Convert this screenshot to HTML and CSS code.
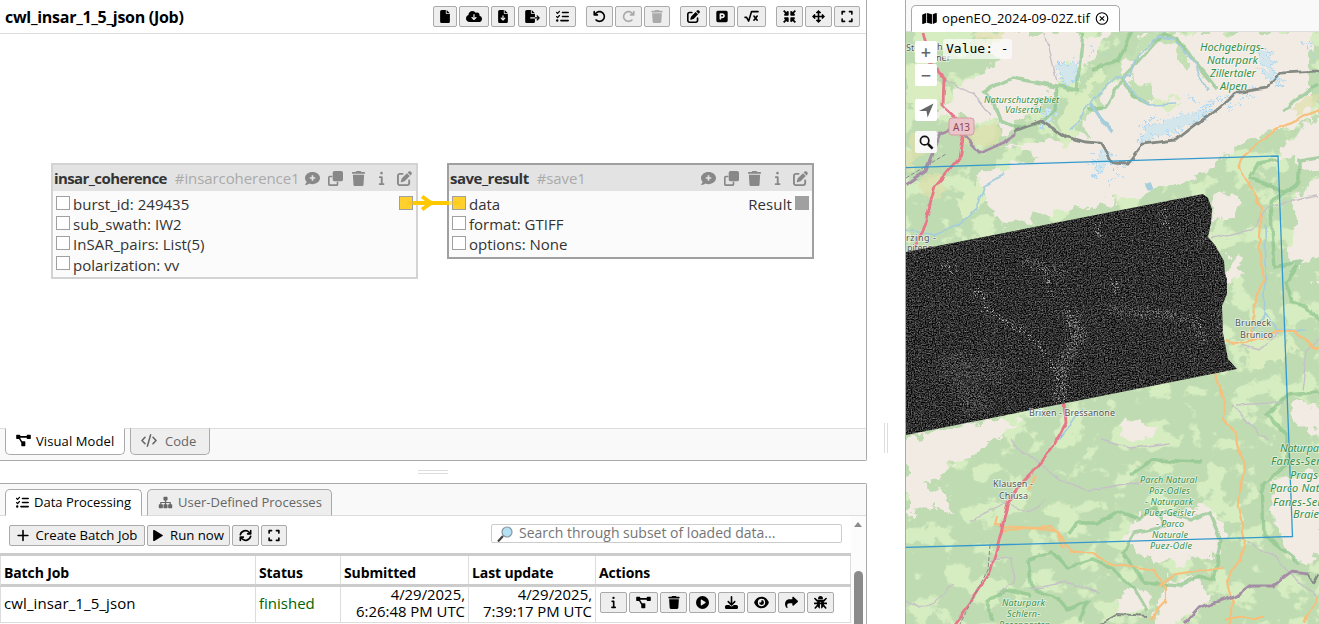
FILE: index.html
```html
<!DOCTYPE html>
<html lang="en">
<head>
<meta charset="utf-8">
<title>openEO Web Editor</title>
<link rel="stylesheet" href="styles.css">
</head>
<body>
<svg class="defs" width="0" height="0" aria-hidden="true">
  <symbol id="file" viewBox="0 0 384 512"><path d="M0 64C0 28.7 28.7 0 64 0H224V128c0 17.7 14.3 32 32 32H384V448c0 35.3-28.7 64-64 64H64c-35.3 0-64-28.7-64-64V64zm384 64H256V0L384 128z"/></symbol>
  <symbol id="cloud" viewBox="0 0 640 512"><path d="M144 480C64.5 480 0 415.5 0 336c0-62.8 40.2-116.2 96.2-135.9c-.1-2.7-.2-5.4-.2-8.1c0-88.4 71.6-160 160-160c59.3 0 111 32.2 138.7 80.2C409.9 102 428.3 96 448 96c53 0 96 43 96 96c0 12.2-2.3 23.8-6.4 34.6C596 238.4 640 290.1 640 352c0 70.7-57.3 128-128 128H144zm79-167l80 80c9.4 9.4 24.6 9.4 33.9 0l80-80c9.4-9.4 9.4-24.6 0-33.9s-24.6-9.4-33.9 0l-39 39V184c0-13.3-10.7-24-24-24s-24 10.7-24 24V318.1l-39-39c-9.4-9.4-24.6-9.4-33.9 0s-9.4 24.6 0 33.9z"/></symbol>
  <symbol id="filedown" viewBox="0 0 384 512"><path d="M64 0C28.7 0 0 28.7 0 64V448c0 35.3 28.7 64 64 64H320c35.3 0 64-28.7 64-64V160H256c-17.7 0-32-14.3-32-32V0H64zM256 0V128H384L256 0zM216 232V334.1l31-31c9.4-9.4 24.6-9.4 33.9 0s9.4 24.6 0 33.9l-72 72c-9.4 9.4-24.6 9.4-33.9 0l-72-72c-9.4-9.4-9.4-24.6 0-33.9s24.6-9.4 33.9 0l31 31V232c0-13.3 10.7-24 24-24s24 10.7 24 24z"/></symbol>
  <symbol id="export" viewBox="0 0 576 512"><path d="M0 64C0 28.7 28.7 0 64 0H224V128c0 17.7 14.3 32 32 32H384V288H216c-13.3 0-24 10.7-24 24s10.7 24 24 24H384V448c0 35.3-28.7 64-64 64H64c-35.3 0-64-28.7-64-64V64zM384 336V288H494.1l-39-39c-9.4-9.4-9.4-24.6 0-33.9s24.6-9.4 33.9 0l80 80c9.4 9.4 9.4 24.6 0 33.9l-80 80c-9.4 9.4-24.6 9.4-33.9 0s-9.4-24.6 0-33.9l39-39H384zm0-208H256V0L384 128z"/></symbol>
  <symbol id="tasks" viewBox="0 0 512 512"><path d="M152.1 38.2c9.9 8.9 10.7 24 1.8 33.9l-72 80c-4.4 4.9-10.6 7.8-17.2 7.9s-12.9-2.4-17.6-7L7 113C-2.3 103.6-2.3 88.4 7 79s24.6-9.4 33.9 0l22.1 22.1 55.1-61.2c8.9-9.9 24-10.7 33.9-1.8zm0 160c9.9 8.9 10.7 24 1.8 33.9l-72 80c-4.4 4.9-10.6 7.8-17.2 7.9s-12.9-2.4-17.6-7L7 273c-9.4-9.4-9.4-24.6 0-33.9s24.6-9.4 33.9 0l22.1 22.1 55.1-61.2c8.9-9.9 24-10.7 33.9-1.8zM224 96c0-17.7 14.3-32 32-32H480c17.7 0 32 14.3 32 32s-14.3 32-32 32H256c-17.7 0-32-14.3-32-32zm0 160c0-17.7 14.3-32 32-32H480c17.7 0 32 14.3 32 32s-14.3 32-32 32H256c-17.7 0-32-14.3-32-32zM160 416c0-17.7 14.3-32 32-32H480c17.7 0 32 14.3 32 32s-14.3 32-32 32H192c-17.7 0-32-14.3-32-32zM48 368a48 48 0 1 1 0 96 48 48 0 1 1 0-96z"/></symbol>
  <symbol id="undo" viewBox="0 0 512 512"><path d="M125.7 160H176c17.7 0 32 14.3 32 32s-14.3 32-32 32H48c-17.7 0-32-14.3-32-32V64c0-17.7 14.3-32 32-32s32 14.3 32 32v51.2L97.6 97.6c87.5-87.5 229.3-87.5 316.8 0s87.5 229.3 0 316.8s-229.3 87.5-316.8 0c-12.5-12.5-12.5-32.8 0-45.3s32.8-12.5 45.3 0c62.5 62.5 163.8 62.5 226.3 0s62.5-163.8 0-226.3s-163.8-62.5-226.3 0L125.7 160z"/></symbol>
  <symbol id="trash" viewBox="0 0 448 512"><path d="M135.2 17.7L128 32H32C14.3 32 0 46.3 0 64S14.3 96 32 96H416c17.7 0 32-14.3 32-32s-14.3-32-32-32H320l-7.2-14.3C307.4 6.8 296.3 0 284.2 0H163.8c-12.1 0-23.2 6.8-28.6 17.7zM416 128H32L53.2 467c1.6 25.3 22.6 45 47.9 45H346.9c25.3 0 46.3-19.7 47.9-45L416 128z"/></symbol>
  <symbol id="edit" viewBox="0 0 512 512"><path d="M471.6 21.7c-21.9-21.9-57.3-21.9-79.2 0L362.3 51.7l97.9 97.9 30.1-30.1c21.9-21.9 21.9-57.3 0-79.2L471.6 21.7zm-299.2 220c-6.1 6.1-10.8 13.6-13.5 21.9l-29.6 88.8c-2.9 8.6-.6 18.1 5.8 24.6s15.9 8.7 24.6 5.8l88.8-29.6c8.2-2.7 15.7-7.4 21.9-13.5L437.7 172.3 339.7 74.3 172.4 241.7zM96 64C43 64 0 107 0 160V416c0 53 43 96 96 96H352c53 0 96-43 96-96V320c0-17.7-14.3-32-32-32s-32 14.3-32 32v96c0 17.7-14.3 32-32 32H96c-17.7 0-32-14.3-32-32V160c0-17.7 14.3-32 32-32h96c17.7 0 32-14.3 32-32s-14.3-32-32-32H96z"/></symbol>
  <symbol id="parking" viewBox="0 0 448 512"><path fill-rule="evenodd" d="M64 32C28.7 32 0 60.7 0 96V416c0 35.3 28.7 64 64 64H384c35.3 0 64-28.7 64-64V96c0-35.3-28.7-64-64-64H64zM192 256h48c17.7 0 32-14.3 32-32s-14.3-32-32-32H192v64zm48 64H192v32c0 17.7-14.3 32-32 32s-32-14.3-32-32V288 168c0-22.1 17.9-40 40-40h72c53 0 96 43 96 96s-43 96-96 96z"/></symbol>
  <symbol id="root" viewBox="0 0 576 512"><path class="ln" d="M32 288h64l80 150L288 64H544M384 240l128 160M512 240L384 400"/></symbol>
  <symbol id="compress" viewBox="0 0 512 512"><path d="M50 2L130 82 160 52Q224 10 224 80V192Q224 224 192 224H80Q10 224 52 160L82 130 2 50zM462 2L382 82 352 52Q288 10 288 80V192Q288 224 320 224H432Q502 224 460 160L430 130 510 50zM50 510L130 430 160 460Q224 502 224 432V320Q224 288 192 288H80Q10 288 52 352L82 382 2 462zM462 510L382 430 352 460Q288 502 288 432V320Q288 288 320 288H432Q502 288 460 352L430 382 510 462z"/></symbol>
  <symbol id="move" viewBox="0 0 512 512"><path d="M256 0l100 100q10 28-20 28h-48v96h96v-48q0-30 28-20l100 100-100 100q-28 10-28-20v-48h-96v96h48q30 0 20 28L256 512 156 412q-10-28 20-28h48v-96h-96v48q0 30-28 20L0 256l100-100q28-10 28 20v48h96v-96h-48q-30 0-20-28z"/></symbol>
  <symbol id="expand" viewBox="0 0 448 512"><path class="ln" d="M32 160V64h96M320 64h96v96M416 352v96h-96M128 448H32v-96"/></symbol>
  <symbol id="comment" viewBox="0 0 512 512"><path fill-rule="evenodd" d="M256 32C114.600 32 0 125 0 240c0 49.600 21.400 95 57 130.700C44 421 3 466 .500 468.500c-2.200 2.300-2.800 5.700-1.500 8.700S4.800 480 8 480c66.300 0 116-31.800 140.600-51.400C181 441 217.600 448 256 448c141.400 0 256-93 256-208S397.400 32 256 32zM228 145h56v67h67v56h-67v67h-56v-67h-67v-56h67z"/></symbol>
  <symbol id="clone" viewBox="0 0 512 512"><path d="M224 0h224c36 0 64 28 64 64v224c0 36-28 64-64 64H224c-36 0-64-28-64-64V64c0-36 28-64 64-64z"/><path class="ln thin" d="M128 188H64q-36 0-36 36v224q0 36 36 36h224q36 0 36-36v-64"/></symbol>
  <symbol id="info" viewBox="0 0 192 512"><circle cx="96" cy="72" r="46"/><path class="ln" d="M40 210h64v236M32 446h132"/></symbol>
  <symbol id="model" viewBox="0 0 576 512"><path d="M24 32h112q24 0 24 24v24h256V56q0-24 24-24h112q24 0 24 24v112q0 24-24 24H440q-24 0-24-24v-24H160v24l72 120h104q24 0 24 24v144q0 24-24 24H224q-24 0-24-24V346L112 192H24Q0 192 0 168V56Q0 32 24 32z"/></symbol>
  <symbol id="code" viewBox="0 0 640 512"><path class="ln" d="M160 128L40 256l120 128M480 128l120 128-120 128M384 32L256 480"/></symbol>
  <symbol id="sitemap" viewBox="0 0 576 512"><path d="M232 32h112q24 0 24 24v96q0 24-24 24h-32v56h184v88h32q24 0 24 24v112q0 24-24 24H416q-24 0-24-24V344q0-24 24-24h32v-40H312v40h32q24 0 24 24v112q0 24-24 24H232q-24 0-24-24V344q0-24 24-24h32v-40H128v40h32q24 0 24 24v112q0 24-24 24H48q-24 0-24-24V344q0-24 24-24h32v-88h184v-56h-32q-24 0-24-24V56q0-24 24-24z"/></symbol>
  <symbol id="plus" viewBox="0 0 448 512"><path class="ln" d="M224 64v384M32 256h384"/></symbol>
  <symbol id="play" viewBox="0 0 384 512"><path d="M0 70Q0 20 48 42L370 232q28 24 0 48L48 470Q0 492 0 442z"/></symbol>
  <symbol id="sync" viewBox="0 0 512 512"><path class="ln" d="M52 225C90 70 290 10 405 135l55 55M460 287C422 442 222 502 107 377l-55-55M460 64v128H340M52 448V320h120"/></symbol>
  <symbol id="playcircle" viewBox="0 0 512 512"><path fill-rule="evenodd" d="M256 0a256 256 0 1 1 0 512 256 256 0 1 1 0-512zM188 150v212q4 20 24 12l160-96q18-22 0-44L212 138q-20-8-24 12z"/></symbol>
  <symbol id="download" viewBox="0 0 512 512"><path d="M288 32c0-17.700-14.300-32-32-32s-32 14.300-32 32V274.700l-73.400-73.400c-12.500-12.500-32.800-12.500-45.300 0s-12.500 32.800 0 45.300l128 128c12.500 12.500 32.800 12.500 45.300 0l128-128c12.500-12.500 12.500-32.800 0-45.300s-32.800-12.500-45.300 0L288 274.700V32zM64 352c-35.300 0-64 28.700-64 64v32c0 35.300 28.700 64 64 64H448c35.300 0 64-28.700 64-64V416c0-35.300-28.700-64-64-64H346.500l-45.300 45.300c-25 25-65.500 25-90.500 0L165.500 352H64z"/></symbol>
  <symbol id="eye" viewBox="0 0 576 512"><path fill-rule="evenodd" d="M288 32C140 32 45 145 3 240q-6 16 0 32c42 95 137 208 285 208s243-113 285-208q6-16 0-32C531 145 436 32 288 32zM144 256a144 144 0 1 1 288 0 144 144 0 1 1-288 0zM288 192c0 35-29 64-64 64h-30a96 96 0 1 0 94-96z"/></symbol>
  <symbol id="share" viewBox="0 0 512 512"><path d="M307 34c12 -5 25-3 35 6l160 144q20 20 0 48L342 376c-22 18-54 4-54-24v-64H176c-80 0-112 60-75 164 6 20-8 36-28 22C-50 370-10 128 176 128h112V64c0-13 7-25 19-30z"/></symbol>
  <symbol id="bug" viewBox="0 0 512 512"><path d="M160 112q0-112 96-112t96 112v16H160zM144 160h224q32 50 24 190-20 110-112 150V230h-48v270q-92-40-112-150-8-140 24-190z"/><path class="ln" d="M36 100l80 80h280l80-80M24 290h464M50 470l90-100M462 470l-90-100"/></symbol>
  <symbol id="map" viewBox="0 0 576 512"><path d="M384 476.100L192 421.200V35.900L384 90.800V476.100zm32-1.200V88.400L543.100 37.500c15.800-6.300 32.900 5.300 32.900 22.300V394.600c0 9.800-6 18.600-15.100 22.300L416 474.800zM15.100 95.100L160 37.200V423.600L32.900 474.500C17.100 480.800 0 469.200 0 452.200V117.400c0-9.800 6-18.600 15.100-22.300z"/></symbol>
</svg>

<div class="app">
  <div class="left">
    <section class="editor">
      <header class="titlebar">
        <h1>cwl_insar_1_5_json (Job)</h1>
        <div class="tools">
          <div class="group first"><button><svg class="w384"><use href="#file"/></svg></button><button class="cl"><svg class="w640"><use href="#cloud"/></svg></button><button><svg class="w384"><use href="#filedown"/></svg></button><button><svg class="w576"><use href="#export"/></svg></button><button><svg class="w512"><use href="#tasks"/></svg></button></div>
          <div class="group"><button><svg class="w512"><use href="#undo"/></svg></button><button class="off"><svg class="w512 flip"><use href="#undo"/></svg></button><button class="off"><svg class="w448"><use href="#trash"/></svg></button></div>
          <div class="group"><button><svg class="w512"><use href="#edit"/></svg></button><button><svg class="w448"><use href="#parking"/></svg></button><button><svg class="w576"><use href="#root"/></svg></button></div>
          <div class="group"><button><svg class="w512"><use href="#compress"/></svg></button><button><svg class="w512"><use href="#move"/></svg></button><button><svg class="w448"><use href="#expand"/></svg></button></div>
        </div>
      </header>
      <div class="canvas">
        <article class="node n1">
          <div class="head"><b>insar_coherence</b><span class="id">#insarcoherence1</span><div class="acts"><svg><use href="#comment"/></svg><svg><use href="#clone"/></svg><svg><use href="#trash"/></svg><svg><use href="#info"/></svg><svg><use href="#edit"/></svg></div></div>
          <div class="body">
            <div class="port"><i></i><span>burst_id: 249435</span><i class="on end"></i></div>
            <div class="port"><i></i><span>sub_swath: IW2</span></div>
            <div class="port"><i></i><span>InSAR_pairs: List(5)</span></div>
            <div class="port"><i></i><span>polarization: vv</span></div>
          </div>
        </article>
        <article class="node n2">
          <div class="head"><b>save_result</b><span class="id">#save1</span><div class="acts"><svg><use href="#comment"/></svg><svg><use href="#clone"/></svg><svg><use href="#trash"/></svg><svg><use href="#info"/></svg><svg><use href="#edit"/></svg></div></div>
          <div class="body">
            <div class="port"><i class="on"></i><span>data</span><span class="end res">Result</span><i class="gray"></i></div>
            <div class="port"><i></i><span>format: GTIFF</span></div>
            <div class="port"><i></i><span>options: None</span></div>
          </div>
        </article>
        <svg class="edge" viewBox="0 0 60 20"><path d="M5 10H57" opacity=".45"/><path d="M11 10H47"/><path d="M20 3.500l9 6.500-9 6.500"/></svg>
      </div>
      <nav class="tabs bottom">
        <a class="tab active vm"><svg class="w576"><use href="#model"/></svg><span>Visual Model</span></a>
        <a class="tab cd"><svg class="w640"><use href="#code"/></svg><span>Code</span></a>
      </nav>
    </section>
    <div class="hsplit"><i></i></div>
    <section class="data">
      <nav class="tabs top">
        <a class="tab active dp"><svg class="w512"><use href="#tasks"/></svg><span>Data Processing</span></a>
        <a class="tab ud"><svg class="w576"><use href="#sitemap"/></svg><span>User-Defined Processes</span></a>
      </nav>
      <div class="scroll">
        <div class="content">
          <div class="bar">
            <button class="txt create"><svg class="w448"><use href="#plus"/></svg><span>Create Batch Job</span></button>
            <button class="txt run"><svg class="w384"><use href="#play"/></svg><span>Run now</span></button>
            <button><svg class="w512"><use href="#sync"/></svg></button>
            <button><svg class="w448"><use href="#expand"/></svg></button>
            <div class="search"><svg viewBox="0 0 16 16"><path d="M1 15.500L6 10" stroke="#444" stroke-width="2.200"/><circle cx="10" cy="6" r="5" fill="#b5e1f5" stroke="#8b979e" stroke-width="1.200"/></svg><span>Search through subset of loaded data...</span></div>
          </div>
          <div class="table">
            <div class="row hd"><div>Batch Job</div><div>Status</div><div>Submitted</div><div>Last update</div><div>Actions</div></div>
            <div class="row"><div class="nm">cwl_insar_1_5_json</div><div class="ok">finished</div><div class="dt">4/29/2025,<br>6:26:48 PM UTC</div><div class="dt">4/29/2025,<br>7:39:17 PM UTC</div>
              <div class="group"><button class="ib"><svg class="w192"><use href="#info"/></svg></button><button><svg class="w576"><use href="#model"/></svg></button><button class="tb"><svg class="w448"><use href="#trash"/></svg></button><button><svg class="w512"><use href="#playcircle"/></svg></button><button><svg class="w512"><use href="#download"/></svg></button><button><svg class="w576"><use href="#eye"/></svg></button><button class="sh"><svg class="w512"><use href="#share"/></svg></button><button><svg class="w512"><use href="#bug"/></svg></button></div>
            </div>
          </div>
        </div>
        <div class="sbar"><i class="up"></i><i class="thumb"></i></div>
      </div>
    </section>
  </div>
  <div class="vsplit"><i></i></div>
  <section class="viewer">
    <nav class="tabs top">
      <a class="tab active mp"><svg class="w576"><use href="#map"/></svg><span>openEO_2024-09-02Z.tif</span><svg class="close" viewBox="0 0 14 14"><circle cx="7" cy="7" r="6.200"/><path d="M4.600 4.600l4.800 4.800M9.400 4.600L4.600 9.400"/></svg></a>
    </nav>
    <div class="map">
      <svg class="tiles" viewBox="906 32 413 592" preserveAspectRatio="none">
        <defs>
          <filter id="land" x="0" y="0" width="100%" height="100%" color-interpolation-filters="sRGB"><feTurbulence type="fractalNoise" baseFrequency=".035 .04" numOctaves="5" seed="8"/><feColorMatrix values="0 0 0 0 .84  0 0 0 0 .93  0 0 0 0 .755  14 0 0 0 -7.500"/></filter>
          <filter id="rough" x="-10%" y="-10%" width="120%" height="120%"><feTurbulence type="fractalNoise" baseFrequency=".07" numOctaves="4" seed="3"/><feDisplacementMap in="SourceGraphic" scale="24" xChannelSelector="R" yChannelSelector="G"/></filter>
          <filter id="wig" x="-10%" y="-10%" width="120%" height="120%"><feTurbulence type="fractalNoise" baseFrequency=".07" numOctaves="2" seed="5"/><feDisplacementMap in="SourceGraphic" scale="6" xChannelSelector="R" yChannelSelector="G"/></filter>
          <filter id="ice" x="-10%" y="-10%" width="120%" height="120%"><feTurbulence type="fractalNoise" baseFrequency=".2" numOctaves="2" seed="5"/><feDisplacementMap in="SourceGraphic" scale="18" xChannelSelector="R" yChannelSelector="G"/></filter>
          <filter id="grain" filterUnits="userSpaceOnUse" x="906" y="190" width="335" height="250" color-interpolation-filters="sRGB"><feTurbulence type="fractalNoise" baseFrequency=".71 .77" numOctaves="3" seed="11"/><feColorMatrix values=".85 0 0 0 -.24  .85 0 0 0 -.24  .85 0 0 0 -.24  0 0 0 0 1"/></filter>
          <filter id="speck" filterUnits="userSpaceOnUse" x="906" y="190" width="335" height="250" color-interpolation-filters="sRGB"><feTurbulence type="fractalNoise" baseFrequency=".55" numOctaves="2" seed="21" result="n"/><feColorMatrix values="0 0 0 0 .75  0 0 0 0 .75  0 0 0 0 .75  10 0 0 0 -5.400" result="m"/><feDisplacementMap in="SourceGraphic" in2="n" scale="16" xChannelSelector="G" yChannelSelector="B" result="d"/><feComposite in="m" in2="d" operator="in"/></filter>
          <clipPath id="scene"><path d="M906 252L1203 194l5 4 4 11-1 14-3 14 7 8 9 16 1 12 2 7v14l-5 12 1 27 5 26 9 10L906 435z"/></clipPath>
        </defs>
        <rect x="906" y="32" width="413" height="592" fill="#bfdbb1"/>
        <rect x="906" y="32" width="413" height="592" filter="url(#land)"/>
        <g fill="#f1ebe3" filter="url(#rough)">
          <path d="M980 32H1110L1085 65 1040 100 1010 132 990 117 930 115 960 90 1000 60z"/>
          <path d="M1140 32H1310V120L1260 135 1200 175 1140 195 1040 215 1000 225 970 175 1040 160 1010 145 1090 138 1080 125 1100 90 1130 60z"/>
          <path d="M1130 75q35-40 60-20l12 45-20 25-30-8-18-14z"/>
          <path d="M1212 192l26 5-2 22-22 5zM1228 255l16 3-6 22-10-2z"/>
          <path d="M1325 175l-28 20-10 55 12 20 26-22zM1325 270l-14 8 14 12zM1325 105l-30 30-20 20 50 22z"/>
          <path d="M906 440l90-22 25 7-60 38-55 30z"/>
          <path d="M906 480l40 12 12 20-25-4-27 10z"/>
          <path d="M1120 420l38 5-6 15-32-3zM1297 400l28 10v20l-30-5z"/>
          <path d="M1145 512l65-6 18 28-18 26-60 2-28-22z"/>
          <path d="M1272 485l53-15v80l-25 12-26-28z"/>
          <path d="M1165 580l32-5 12 25-30 24h-25zM1115 598l30-8 2 20-30 5z"/>
        </g>
        <g fill="#d9edc1" filter="url(#rough)"><path d="M1060 135l20-40 20-28 20 6-30 35zM1070 60l10 20-12 70-8-10zM1150 97l28 5-10 8-20-4zM908 60l22 5 20 30-20 20-22-10zM1230 340l40-4 30 12-40 20zM955 200l25-20 8 20-20 15z"/></g>
        <g fill="none" stroke="#c3dfb4" stroke-width="9" filter="url(#rough)"><path d="M1085 120l20-40 22-22 25-24 22 8 18 28M1128 75l20 25"/></g>
        <g fill="#dfe0ac" opacity=".7" filter="url(#rough)"><path d="M980 32h40l-10 10h-30zM975 124l30 5-10 20-30-4zM925 175l20 5-5 15-20-5zM908 130l20 5-14 35-8-5zM1290 105l30-12v10l-20 14z"/></g>
        <g class="ice" filter="url(#ice)"><path d="M1058 65l18-3 2 16-14 8zM1143 128l30-12 20-2 20-10-10 15-30 13-20 5-12 8zM1045 110l10-4-3 18-8 2zM1096 152l16 2-5 10-12 12zM1258 45l12 10 4 22 12 4-5 4-15-8-4-12z"/><path fill="none" d="M1096 45l-6 14M1190 98l14 8 28-12 25-5M1225 95l5 15 25-18M1108 185l12-12M1108 50h5M1306 40l10 25M1140 125l15-8M1090 165l8 6M1115 170l15-10"/></g>
        <g class="halo" filter="url(#wig)"><path d="M1140 60L1122 78 1105 108 1088 110M1140 60l22-25 15 4 15 20 25 30M1122 78l10 18 18 8M1083 32l-6 58-18-4M984 91l28-13 45 8-2 24-14 13-22 5-18-8-8-20zM1092 70l25-10 15-28M1283 110l34-26"/></g>
        <g class="halo" filter="url(#wig)"><path d="M1278 160l-20 3-8 15 15 5 20 10 14-10v-22l25-4M1290 190l-20 12 5 65 25-5-14 20 6 20 14 5 16 15M1319 392l-32 3-20 20 20 20v30l-25 20 2 50 36 28M1130 475l22-15 50 2M1070 533l6-10h22l20-12 22 8 15-12 10 20-30 6-12 20 22 30 34 3 20-10 14 4 8-40-12-28-18 8-25-8-10 4M1028 560l24-8 15 16 25-8 20 8 22 20 13 22M1028 560l4 28 25 10 10 12 20-8-8 22M986 602l20-12 25 6M986 602l8 20"/></g>
        <g class="water" filter="url(#wig)"><path d="M1070 130l18-24 25-28 18-4 8-20 18-16 18 2 20 25 12 25M1122 75l10 18 18 12 26-1M906 230l30 5 25-12 15-14 8-22 20-12M1265 225l1 50-2 40-12 18M1082 408l-14 20-10 12M1264 312l12 18 30 0"/><path d="M1091 104l9 14 12 14" stroke-width="4"/><path d="M1147 182l3 8" stroke-width="5"/></g>
        <g class="minor" filter="url(#wig)"><path d="M1045 32l12 50M945 80l30 15 15 20M1212 238l40-8 15-24 50-10M1240 345l20 5 20-20M1235 405l50-3M1302 390l5-40 12-10M1232 405l25 25 10 10M970 520l35-16 22 8 20-12M990 560l22-2 2 25-14 10M1010 440l50 40 30 10 60-10M906 600l14 8 14-6 20-18M1243 538l35 20 15 20 25 20M1030 590l35-8 35 10M1100 440l30 8 40-5"/></g>
        <g class="orange" filter="url(#wig)"><path d="M1319 110l-45 20-30 25-5 14 22 38-2 30 5 43-10 25-2 38M1226 341l20 2 30-12 20 0 18 16h8M1215 373l10 28-2 16 12 14 10 40-8 30 8 40-5 20-14 20 8 20-5 20 6 24M1000 530l45-2 12 4 15 20h16l24 12 18 2 24 4 12 18v14l-15 16M997 516l-2 10 42 2 15-2 12 22M1158 586l18-12 26-4 20-2M1224 618h40M1319 598l-10 12-5 14M1028 490l8-14"/></g>
        <g class="motor" filter="url(#wig)"><path d="M922 32l8 30 14 16-1 28 15 14 5 12-4 26-24 28-9 34-10 24-6 20M1064 403l2 20-12 22-16 22-15 15-15 22-10 40-8 28-18 28-24 32"/></g>
        <path class="rail" d="M906 178l40-24M990 545l-2 25-14 26-14 28"/>
        <g class="border" filter="url(#wig)"><path d="M1015 132l26-10 25 16 20 5 14 1 12 20 15 1 15-20 34-4 26-20 15-10 20-17 28-5 15-15 40-2 14-15" transform="translate(0 -1)"/><path stroke="#a48da5" d="M906 185l20-14 14-38 16-6 25 26 18-8 18-12M1185 624l14-16 36-12 16-10 22 0 18-14 17 2"/><path stroke-width="1.800" d="M1100 624l18-10 30 2M1308 573l6 10 10-20"/></g>
        <g class="town"><text x="906" y="241" textLength="30">rzing -</text><text x="907" y="251" textLength="26">piteno</text></g>
        <g clip-path="url(#scene)"><rect x="906" y="190" width="335" height="250" filter="url(#grain)"/>
          <g class="specks" filter="url(#speck)"><path d="M976 286l12 24 32 18 25 25 12 20 8 30" stroke-width="3"/><path d="M1068 310l12 25-16 25-4 42" stroke-width="14" opacity=".6"/><path d="M1110 310l55 4 28 8 12 20" stroke-width="8" opacity=".5"/><path d="M1096 225l4 15M1042 265l10 30M1115 280v15M1160 208l8 20M1195 318l6 10M945 262l10 10" stroke-width="4" opacity=".8"/><path d="M940 365l40 4 25 5M960 365l18 50" stroke-width="26" opacity=".3"/><path d="M1195 240l25-4M1220 310v25M1070 315v5M1025 260l40 15" stroke-width="10" opacity=".35"/></g>
        </g>
        <path class="bbox" d="M904 167.600L1278 156l14.500 380.500L904 547.500"/>
        <g class="town"><text x="1235" y="326" textLength="36">Bruneck</text><text x="1240" y="338" textLength="33">Brunico</text><text x="1029" y="416" textLength="86">Brixen - Bressanone</text><text x="993" y="487" textLength="40">Klausen -</text><text x="999" y="499" textLength="29">Chiusa</text><text x="906" y="51">St</text><text x="937" y="50">h</text><text x="936" y="61">ner</text></g>
        <g class="shield"><rect x="949" y="118" width="25" height="17" rx="3"/><text x="953" y="131" textLength="17">A13</text></g>
        <g class="park"><text x="1200" y="51" textLength="64">Hochgebirgs-</text><text x="1207" y="64" textLength="51">Naturpark</text><text x="1210" y="77" textLength="46">Zillertaler</text><text x="1220" y="90" textLength="27">Alpen</text><text x="1280" y="452" textLength="48">Naturpark</text><text x="1271" y="465" textLength="73">Fanes-Sennes-</text><text x="1290" y="479" textLength="28">Prags</text><text x="1270" y="492" textLength="75">Parco Naturale</text><text x="1273" y="506" textLength="72">Fanes-Sennes-</text><text x="1293" y="518" textLength="31">Braies</text></g>
        <g class="park sm"><text x="984" y="103" textLength="75">Naturschutzgebiet</text><text x="1005" y="113" textLength="36">Valsertal</text><text x="1140" y="483" textLength="57">Parch Natural</text><text x="1149" y="494" textLength="41">Pöz-Odles</text><text x="1145" y="505" textLength="48">- Naturpark</text><text x="1144" y="516" textLength="51">Puez-Geisler</text><text x="1156" y="527" textLength="28">- Parco</text><text x="1152" y="538" textLength="36">Naturale</text><text x="1150" y="549" textLength="42">Puez-Odle</text><text x="1002" y="606" textLength="43">Naturpark</text><text x="1007" y="617" textLength="33">Schlern-</text><text x="999" y="628" textLength="51">Rosengarten</text></g>
      </svg>
      <div class="mapval">Value: -</div>
      <div class="ctl zi">+</div><div class="ctl zo">−</div>
      <div class="ctl geo"><svg viewBox="0 0 14 14"><path d="M0 7.500L13.500 .500 8 13.500 7 7.500z" fill="#666"/></svg></div>
      <div class="ctl find"><svg viewBox="0 0 16 16"><circle cx="6" cy="6" r="4.500" fill="none" stroke="#111" stroke-width="1.800"/><path d="M9.500 9.500l5 5" stroke="#111" stroke-width="2.800"/></svg></div>
    </div>
  </section>
</div>
</body>
</html>
```
FILE: styles.css
```css
* { box-sizing: border-box; }
body { margin: 0; width: 1319px; height: 624px; overflow: hidden; background: #fff; color: #000; font: 14px "Open Sans", "Noto Sans", sans-serif; }
.defs { position: absolute; }
svg { display: block; fill: currentColor; }
.ln { fill: none; stroke: currentColor; stroke-width: 64; stroke-linecap: round; stroke-linejoin: round; }
.thin { stroke-width: 56; }
.app { display: flex; height: 624px; }
.left { width: 867px; display: flex; flex-direction: column; }
.editor { height: 461px; display: flex; flex-direction: column; border: solid #aaa; border-width: 0 1px 1px 0; border-bottom-right-radius: 2px; }
.titlebar { height: 34px; flex: none; display: flex; align-items: flex-start; justify-content: space-between; padding: 6px 6px 0 5px; border-bottom: 1px solid #ddd; }
h1 { margin: 0; font-size: 16px; line-height: 23px; letter-spacing: -.28px; white-space: nowrap; }
.tools { display: flex; gap: 10px; }
.group { display: flex; gap: 2px; }
.first { gap: 2.3px; }
button { height: 21px; padding: 0 6px; display: flex; align-items: center; justify-content: center; border: 1px solid #aaa; border-radius: 2px; background: #eee; color: #000; font: inherit; white-space: nowrap; }
button.off { color: #aaa; }
button svg, .tab svg { height: 13px; flex: none; }
.w192 { width: 5px; } .w384 { width: 10px; } .w448 { width: 12px; } .w512 { width: 13px; } .w576 { width: 15px; } .w640 { width: 16px; }
.flip { transform: scaleX(-1); }
.canvas { flex: 1; position: relative; }
.node { position: absolute; top: 129px; width: 367px; border: 2px solid #d3d3d3; background: #fbfbfb; color: #333; font-size: 15px; }
.n1 { left: 51px; height: 116px; }
.n2 { left: 447px; height: 96px; border-color: #a0a0a0; }
.head { height: 26px; display: flex; align-items: center; padding: 0 4.5px 0 1px; background: #e3e3e3; }
.head b { letter-spacing: -.6px; }
.n2 .head b { letter-spacing: -.5px; }
.id { margin-left: 8px; color: #aaa; letter-spacing: -.08px; }
.acts { display: flex; gap: 8px; margin-left: auto; color: #888; }
.acts svg { width: 15px; height: 15px; }
.body { padding: 3px 3px 0; }
.port { height: 20.2px; display: flex; align-items: center; }
.port span { margin-left: 3px; }
.n1 .port span { letter-spacing: .03px; }
.port .res { letter-spacing: .1px; }
.port i { width: 14px; height: 14px; margin-top: -3px; border: 1px solid #a0a0a0; background: #fff; }
.port i.on { background: #ffd02e; }
.port i.gray { background: #a0a0a0; margin-left: 3px; }
.port .end { margin-left: auto; }
.edge { position: absolute; left: 402px; top: 159px; width: 60px; height: 20px; fill: none; stroke: #ffc800; stroke-width: 4; }
.tabs { height: 32px; flex: none; display: flex; gap: 5px; padding: 0 5px; background: #f9f9f9; }
.tab { display: flex; align-items: center; padding: 0 10px 1px; border: 1px solid #aaa; background: #eee; color: #666; font-size: 13px; white-space: nowrap; }
.tab.active { background: #fff; color: #000; }
.tab span { position: relative; top: -.5px; }
.bottom { border-top: 1px solid #ddd; }
.bottom .tab { height: 27px; margin-top: -1px; border-top-color: #fff; border-radius: 0 0 5px 5px; padding-bottom: 2px; }
.bottom .tab span { top: .5px; }
.bottom .cd { border-top-color: #ddd; }
.vm { width: 120px; } .cd { width: 80px; } .dp { width: 137px; } .ud { width: 185px; } .mp { width: 209px; }
.vm span { margin-left: 5px; letter-spacing: .1px; } .cd span { margin-left: 8px; } .dp span, .ud span, .mp span { margin-left: 5px; }
.mp span { letter-spacing: .13px; }
.top { border-bottom: 1px solid #ddd; padding-top: 5px; }
.top .tab { height: 27px; border-radius: 5px 5px 0 0; border-bottom-color: #ddd; }
.top .active { border-bottom-color: #fff; }
.hsplit { height: 22px; flex: none; display: flex; align-items: center; justify-content: center; }
.hsplit i { width: 30px; height: 4px; margin-right: 2px; border: solid #ddd; border-width: 1px 0; }
.data { flex: 1; border: solid #aaa; border-width: 1px 1px 0 0; border-top-right-radius: 2px; display: flex; flex-direction: column; min-height: 0; }
.scroll { flex: 1; display: flex; min-height: 0; }
.content { width: 851px; }
.bar { height: 37px; display: flex; align-items: flex-start; gap: 2px; padding: 9px 9px 0; }
.bar .txt span { margin: -2px 0 0 7px; font-size: 13.2px; }
.create { width: 136px; } .run { width: 83px; }
.search { width: 351px; height: 19px; margin: -1px 0 0 auto; padding-left: 5px; border: 1px solid #ccc; border-radius: 2px; display: flex; align-items: center; color: #757575; white-space: nowrap; }
.search svg { width: 16px; height: 16px; fill: none; }
.search span { margin: -2px 0 0 6px; }
.table { border-top: 3px solid #ccc; }
.row { display: grid; grid-template-columns: 255px 85px 128px 127px 255px; height: 36px; border-bottom: 1px solid #ddd; width: 851px; border-left: 1px solid #ddd; font-size: 15px; }
.row > div { border-right: 1px solid #ddd; padding: 0 3px 4px; display: flex; align-items: center; }
.nm { letter-spacing: .1px; }
.row.hd { height: 31px; border-bottom: 3px solid #ccc; font-weight: bold; font-size: 14px; letter-spacing: -.12px; }
.row.hd > div { padding: 4px 3px 0; }
.ok { color: #006400; }
.row > .dt { display: block; text-align: right; line-height: 17px; padding: 0 3px 0 0; margin-top: -1px; font-size: 14.9px; }
.row > .group { padding: 0 0 5px 4px; gap: 2px; }
.group button { flex: none; }
.ib, .row .tb { width: 27px; }
.sbar { width: 15px; background: #fcfcfc; position: relative; }
.up { position: absolute; left: 3px; top: 6px; border: solid transparent; border-width: 0 4.5px 5px; border-bottom-color: #8b8b8b; }
.thumb { position: absolute; left: 3px; top: 55px; width: 9px; bottom: 0; border-radius: 5px 5px 0 0; background: #8b8b8b; }
.vsplit { width: 38px; display: flex; align-items: flex-start; justify-content: center; }
.vsplit i { width: 4px; height: 30px; margin-top: 423px; border: solid #ddd; border-width: 0 1px; }
.viewer { width: 414px; border-left: 1px solid #aaa; display: flex; flex-direction: column; }
.viewer .tabs { height: 32px; }
.close { width: 14px; margin-left: 5px; fill: none; stroke: #000; stroke-width: 1.2; }
.map { position: relative; flex: 1; overflow: hidden; }
.tiles { width: 413px; height: 592px; font: 9px "Noto Sans", sans-serif; }
.ice { fill: #d2e6ec; stroke: #a6d4f5; stroke-width: 1.5; stroke-dasharray: 3 2; }
.halo path { fill: none; stroke: #8cc58b; stroke-width: 3.4; opacity: .7; }
.water { fill: none; stroke: #a5cddb; stroke-width: 1.7; }
.minor { fill: none; stroke: #c5c0c7; stroke-width: 1.3; }
.orange { fill: none; stroke: #f7bf7b; stroke-width: 2.2; }
.motor { fill: none; stroke: #e77789; stroke-width: 2.8; }
.rail { fill: none; stroke: #888; stroke-dasharray: 4 2; }
.border { fill: none; stroke: #858b84; stroke-width: 2.8; }
.specks { fill: none; stroke: #fff; }
.bbox { fill: none; stroke: #39c; stroke-width: 1.3; }
.town { fill: #555; paint-order: stroke; stroke: #ffffffa0; stroke-width: 1.5px; }
.shield rect { fill: #eac5c9; stroke: #d99ba3; }
.shield text { fill: #8f4453; font-size: 10px; }
.park { fill: #35914a; font-style: italic; font-size: 11px; paint-order: stroke; stroke: #ffffff90; stroke-width: 1.5px; }
.park.sm { font-size: 9px; }
.mapval { position: absolute; left: 37px; top: 7px; padding: 0 3px; height: 20px; border-radius: 3px; background: #ffffffa8; font: 13px/19px "DejaVu Sans Mono", monospace; }
.ctl { position: absolute; left: 9px; width: 22px; height: 22px; display: flex; align-items: center; justify-content: center; background: #fff; color: #666; border-radius: 2px; font-size: 18px; font-weight: 600; }
.zi { top: 9px; } .zo { top: 32px; } .geo { top: 67px; } .find { top: 99px; background: #f8f8f8; }
.ctl svg { width: 15px; height: 15px; }
```
